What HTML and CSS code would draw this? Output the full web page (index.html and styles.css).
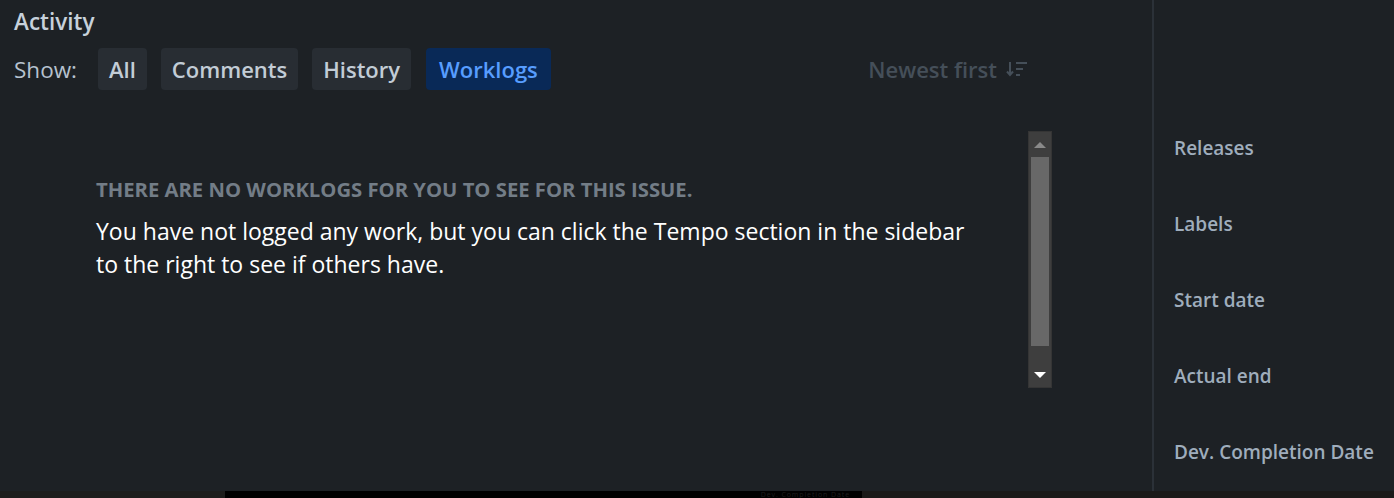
FILE: index.html
```html
<!DOCTYPE html>
<html>
<head>
<meta charset="utf-8">
<link rel="stylesheet" href="styles.css">
</head>
<body>
<div class="page">
  <main class="main">
    <h2 class="title">Activity</h2>
    <div class="toolbar">
      <span class="show">Show:</span>
      <button class="tab">All</button>
      <button class="tab">Comments</button>
      <button class="tab">History</button>
      <button class="tab active">Worklogs</button>
      <span class="sort">Newest first
        <svg class="sort-icon" width="22" height="20" viewBox="0 0 22 20" aria-hidden="true">
          <path d="M4 3v13M1 12.5l3 3.5 3-3.5" fill="none" stroke="#454f59" stroke-width="2"/>
          <rect x="10" y="3" width="11" height="2" fill="#454f59"/>
          <rect x="10" y="9" width="7" height="2" fill="#454f59"/>
          <rect x="10" y="15" width="4" height="2" fill="#454f59"/>
        </svg>
      </span>
    </div>
    <div class="panel">
      <div class="panel-body">
        <h3 class="empty-title">THERE ARE NO WORKLOGS FOR YOU TO SEE FOR THIS ISSUE.</h3>
        <p class="empty-text">You have not logged any work, but you can click the Tempo section in the sidebar to the right to see if others have.</p>
      </div>
      <div class="scrollbar">
        <div class="sb-btn"><span class="tri-up"></span></div>
        <div class="sb-thumb"></div>
        <div class="sb-track"></div>
        <div class="sb-btn"><span class="tri-down"></span></div>
      </div>
    </div>
  </main>
  <aside class="side">
    <div class="field">Releases</div>
    <div class="field">Labels</div>
    <div class="field">Start date</div>
    <div class="field">Actual end</div>
    <div class="field">Dev. Completion Date</div>
  </aside>
</div>
<div class="strip">
  <div class="strip-a"></div>
  <div class="strip-b"><span class="ghost">Dev. Completion Date</span></div>
  <div class="strip-c"></div>
</div>
</body>
</html>
```
FILE: styles.css
```css
* { box-sizing: border-box; }
html, body { margin: 0; padding: 0; }
body {
  background: #1d2125;
  font-family: "Open Sans", "Noto Sans", sans-serif;
  width: 1394px;
  height: 498px;
  overflow: hidden;
}
.page {
  display: flex;
  height: 491px;
}
.main {
  width: 1152px;
  padding: 7px 0 0 14px;
}
.title {
  margin: 0;
  font-size: 22.5px;
  font-weight: 600;
  color: #c7d1db;
  line-height: 30px;
}
.toolbar {
  display: flex;
  align-items: center;
  margin-top: 11px;
  height: 42px;
}
.show {
  font-size: 22.5px;
  color: #b6c2cf;
  margin-right: 21px;
}
.tab {
  font-family: inherit;
  font-size: 22px;
  font-weight: 600;
  color: #c2ccd6;
  background: #282d33;
  border: none;
  border-radius: 4px;
  height: 42px;
  padding: 0 11px;
  margin-right: 14px;
}
.tab.active {
  background: #092957;
  color: #579dff;
  padding: 0 13px;
  margin-left: 1px;
}
.sort {
  margin-left: auto;
  margin-right: 124px;
  display: flex;
  align-items: center;
  gap: 9px;
  font-size: 22px;
  font-weight: 600;
  color: #454f59;
}
.panel {
  display: flex;
  margin-top: 41px;
  height: 257px;
}
.panel-body {
  flex: 1;
  padding: 44px 0 0 82px;
}
.empty-title {
  margin: 0;
  font-size: 20.25px;
  font-weight: 700;
  color: #737d87;
  line-height: 28px;
}
.empty-text {
  margin: 12px 0 0;
  font-size: 23px;
  line-height: 33px;
  color: #ffffff;
  width: 880px;
}
.scrollbar {
  width: 24px;
  background: #3e3e3e;
  border: 1px solid #353535;
  display: flex;
  flex-direction: column;
  margin-right: 100px;
}
.sb-btn {
  height: 25px;
  display: flex;
  align-items: center;
  justify-content: center;
}
.sb-thumb {
  height: 189px;
  margin: 0 2px;
  background: #686868;
}
.sb-track { flex: 1; }
.tri-up {
  width: 0; height: 0;
  border-left: 6px solid transparent;
  border-right: 6px solid transparent;
  border-bottom: 6px solid #8a8a8a;
}
.tri-down {
  width: 0; height: 0;
  border-left: 6px solid transparent;
  border-right: 6px solid transparent;
  border-top: 6px solid #ffffff;
}
.side {
  flex: 1;
  border-left: 2px solid #2b3138;
  padding: 135px 0 0 20px;
  display: flex;
  flex-direction: column;
  overflow: hidden;
}
.field {
  flex-shrink: 0;
  height: 76px;
  font-size: 19px;
  font-weight: 600;
  color: #9fadbc;
  line-height: 26px;
}
.strip {
  display: flex;
  height: 7px;
}
.strip-a { width: 225px; background: #1d1d1c; }
.strip-b {
  width: 637px;
  background: #000;
  display: flex;
  justify-content: flex-end;
}
.ghost {
  font-size: 7px;
  line-height: 7px;
  letter-spacing: 0.9px;
  color: #1e1e1e;
  margin-right: 12px;
}
.strip-c { flex: 1; background: #1b1a19; }
```
